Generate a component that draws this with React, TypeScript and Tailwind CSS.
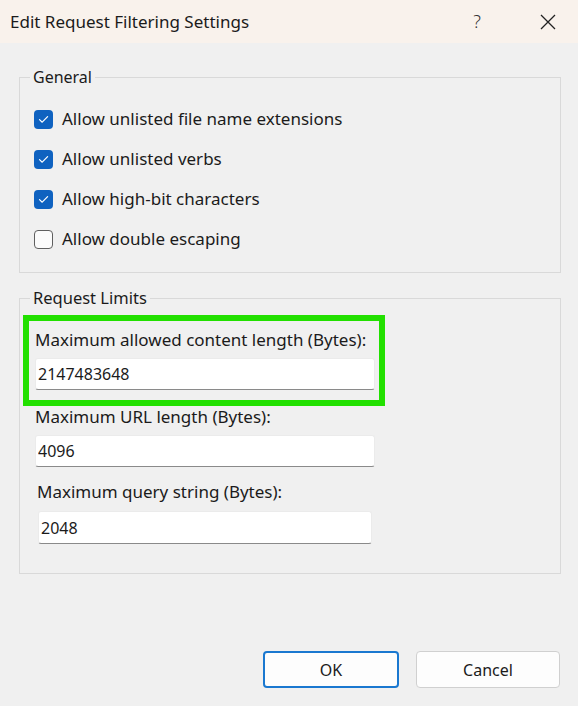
import React, { useState } from "react";

type CheckRowProps = {
  label: string;
  checked: boolean;
  onToggle: () => void;
};

const CheckRow = ({ label, checked, onToggle }: CheckRowProps) => {
  return (
    <div className="h-[40px] flex items-center cursor-default" onClick={onToggle}>
      <div
        className={
          checked
            ? "w-[19px] h-[19px] rounded-[4px] bg-[#0f62c0] flex items-center justify-center ml-[14px]"
            : "w-[19px] h-[19px] rounded-[4px] border-[1.5px] border-[#5f5f5f] bg-[#fbfbfb] ml-[14px]"
        }
      >
        {checked && (
          <svg width="11" height="9" viewBox="0 0 11 9" fill="none">
            <path d="M1.5 4.6 L4.2 7.2 L9.6 1.6" stroke="white" strokeWidth="1.2" strokeLinecap="round" strokeLinejoin="round" />
          </svg>
        )}
      </div>
      <span className="ml-[9px] text-[17px] text-[#1b1b1b]">{label}</span>
    </div>
  );
};

type FieldProps = {
  label: string;
  value: string;
  inputClass: string;
  labelClass?: string;
};

const Field = ({ label, value, inputClass, labelClass }: FieldProps) => {
  return (
    <div className="flex flex-col">
      <p className={"leading-[22px] text-[17px] text-[#1b1b1b] " + (labelClass ?? "")}>{label}</p>
      <input
        type="text"
        defaultValue={value}
        className={
          "h-[32px] bg-white rounded-[3px] border border-[#ebebeb] border-b-[#8a8a8a] px-[2px] text-[16px] text-[#1b1b1b] outline-none " +
          inputClass
        }
      />
    </div>
  );
};

export default function App() {
  const [checks, setChecks] = useState([true, true, true, false]);
  const labels = [
    "Allow unlisted file name extensions",
    "Allow unlisted verbs",
    "Allow high-bit characters",
    "Allow double escaping",
  ];

  const toggle = (index: number) => {
    const list = [...checks];
    list[index] = !list[index];
    setChecks(list);
  };

  return (
    <div
      className="w-[578px] h-[706px] bg-[#f0f0f0] flex flex-col overflow-hidden"
      style={{ fontFamily: '"Segoe UI", "Noto Sans", "Open Sans", sans-serif' }}
    >
      {/* title bar */}
      <div className="h-[43px] bg-[#f9f2ec] flex items-center shrink-0">
        <span className="ml-[10px] text-[17px] text-[#1b1b1b]">Edit Request Filtering Settings</span>
        <span className="ml-auto mr-[59px] text-[18px] text-[#333] font-light">?</span>
        <svg width="16" height="16" viewBox="0 0 16 16" className="mr-[22px]">
          <path d="M1 1 L15 15 M15 1 L1 15" stroke="#222" strokeWidth="1.3" />
        </svg>
      </div>

      <div className="pl-[19px] pr-[17px] flex flex-col">
        <fieldset className="mt-[23px] border border-[#d9d9d9] pb-[13px]">
          <legend className="ml-[10px] px-[3px] leading-[22px] text-[16px] text-[#1b1b1b]">General</legend>
          <div className="pt-[11px] flex flex-col">
            {labels.map((item, index) => (
              <CheckRow key={index} label={item} checked={checks[index]} onToggle={() => toggle(index)} />
            ))}
          </div>
        </fieldset>

        <fieldset className="mt-[14px] border border-[#d9d9d9] pb-[29px]">
          <legend className="ml-[10px] px-[3px] leading-[22px] text-[16.5px] text-[#1b1b1b]">Request Limits</legend>
          <div className="mt-[6px] ml-[3px] w-[362px] border-[6px] border-[#22e000] pt-[8px] pl-[6px] pr-[4px] pb-[10px]">
            <Field label="Maximum allowed content length (Bytes):" value="2147483648" inputClass="mt-[7px] w-[340px]" />
          </div>
          <div className="ml-[15px] flex flex-col">
            <Field label="Maximum URL length (Bytes):" value="4096" inputClass="mt-[7px] w-[340px]" />
            <div className="mt-[14px]">
              <Field
                label="Maximum query string (Bytes):"
                value="2048"
                labelClass="ml-[2px]"
                inputClass="mt-[8px] ml-[3px] w-[334px] h-[33px]"
              />
            </div>
          </div>
        </fieldset>
      </div>

      <div className="mt-auto mb-[18px] mr-[18px] flex justify-end gap-[17px]">
        <button className="w-[136px] h-[37px] rounded-[4px] border-2 border-[#1a78d0] bg-[#fdfdfd] text-[16px] text-[#1b1b1b]">
          OK
        </button>
        <button className="w-[144px] h-[37px] rounded-[4px] border border-[#d0d0d0] bg-[#fdfdfd] text-[16px] text-[#1b1b1b]">
          Cancel
        </button>
      </div>
    </div>
  );
}
